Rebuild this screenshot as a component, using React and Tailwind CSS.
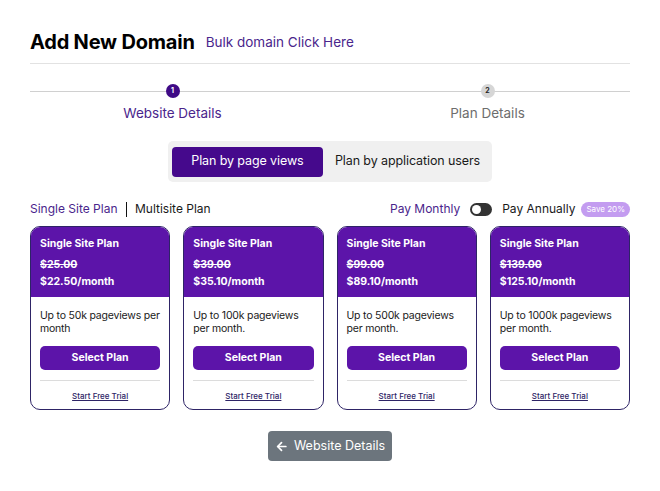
import React from "react";

const plans = [
  { old: "$25.00", price: "$22.50/month", desc: ["Up to 50k pageviews per", "month"] },
  { old: "$39.00", price: "$35.10/month", desc: ["Up to 100k pageviews", "per month."] },
  { old: "$99.00", price: "$89.10/month", desc: ["Up to 500k pageviews", "per month."] },
  { old: "$139.00", price: "$125.10/month", desc: ["Up to 1000k pageviews", "per month."] },
];

function Card({ p }) {
  return (
    <div className="flex flex-col rounded-[10px] border border-[#2e2466] overflow-hidden bg-white">
      <div className="bg-[#5c14a9] px-[9px] pt-[11px] pb-[7px] text-white font-bold text-[10.5px]">
        <div className="leading-[12px]">Single Site Plan</div>
        <div className="mt-[6px] leading-[17px] line-through">{p.old}</div>
        <div className="leading-[17px]">{p.price}</div>
      </div>
      <div className="flex flex-col px-[9px] pt-[12px] pb-[8px]">
        <div className="text-[10.5px] leading-[13px] tracking-[-0.2px] whitespace-nowrap text-[#1a1a1a] h-[26px]">
          <div>{p.desc[0]}</div>
          <div>{p.desc[1]}</div>
        </div>
        <button className="mt-[11px] h-[24px] rounded-[5px] bg-[#5c14a9] text-white text-[10.5px] font-bold">
          Select Plan
        </button>
        <div className="mt-[10px] h-px bg-[#dcdcdc]" />
        <div className="mt-[10px] text-center text-[8px] leading-[10px] font-medium text-[#2e2466] underline">
          Start Free Trial
        </div>
      </div>
    </div>
  );
}

export default function App() {
  return (
    <div className="w-[660px] h-[491px] bg-white px-[30px] pt-[28px]" style={{ fontFamily: "Inter, 'Noto Sans', sans-serif" }}>
      <div className="flex items-center border-b border-[#e2e2e2] pb-[7px]">
        <h1 className="text-[20px] leading-[28px] font-bold text-black tracking-[-0.2px]">Add New Domain</h1>
        <span className="ml-[11px] text-[13.5px] text-[#4a258c]">Bulk domain Click Here</span>
      </div>

      <div className="relative mt-[20px] -mx-[15px]">
        <div className="absolute left-[15px] right-[15px] top-[7px] h-px bg-[#d0d0d0]" />
        <div className="relative grid grid-cols-2">
          <div className="flex flex-col items-center">
            <div className="w-[14px] h-[14px] rounded-full bg-[#3f0a86] text-white text-[7px] font-bold flex items-center justify-center">1</div>
            <div className="mt-[5px] text-[13.5px] leading-[20px] text-[#4a258c]">Website Details</div>
          </div>
          <div className="flex flex-col items-center">
            <div className="w-[14px] h-[14px] rounded-full bg-[#d6d6d6] text-[#222] text-[7px] font-bold flex items-center justify-center">2</div>
            <div className="mt-[5px] text-[13.5px] leading-[20px] text-[#6d6d6d]">Plan Details</div>
          </div>
        </div>
      </div>

      <div className="flex justify-center mt-[18px]">
        <div className="flex items-center bg-[#f0f0f0] rounded-[5px] p-[5px] pl-[4px] pr-[12px] h-[41px]">
          <div className="h-[30px] w-[151px] rounded-[4px] bg-[#45098c] text-white text-[12.5px] tracking-[-0.1px] flex items-center justify-center">
            Plan by page views
          </div>
          <div className="ml-[12px] text-[12.5px] tracking-[-0.1px] text-[#1a1a1a]">Plan by application users</div>
        </div>
      </div>

      <div className="flex items-center justify-between mt-[18px] h-[18px]">
        <div className="flex items-center text-[12px]">
          <span className="text-[#4a258c]">Single Site Plan</span>
          <span className="mx-[8px] w-[1.5px] h-[15px] bg-[#111]" />
          <span className="text-[#1a1a1a]">Multisite Plan</span>
        </div>
        <div className="flex items-center text-[12px]">
          <span className="text-[#4a258c]">Pay Monthly</span>
          <span className="ml-[10px] w-[22px] h-[13px] rounded-full bg-[#333] relative">
            <span className="absolute left-[2px] top-[2px] w-[9px] h-[9px] rounded-full bg-white" />
          </span>
          <span className="ml-[10px] text-[#1a1a1a]">Pay Annually</span>
          <span className="ml-[6px] h-[15px] px-[5px] rounded-full bg-[#c39cf0] text-white text-[8px] flex items-center">Save 20%</span>
        </div>
      </div>

      <div className="grid grid-cols-4 gap-[13px] mt-[8px]">
        {plans.map((p, i) => (
          <Card key={i} p={p} />
        ))}
      </div>

      <div className="flex justify-center mt-[21px]">
        <button className="h-[30px] w-[124px] rounded-[4px] bg-[#6c757d] text-white text-[12.5px] flex items-center justify-center gap-[6px]">
          <svg width="13" height="13" viewBox="0 0 24 24" fill="none" stroke="white" strokeWidth="3.2" strokeLinecap="round" strokeLinejoin="round">
            <path d="M20 12H5" />
            <path d="M12 19l-7-7 7-7" />
          </svg>
          Website Details
        </button>
      </div>
    </div>
  );
}
